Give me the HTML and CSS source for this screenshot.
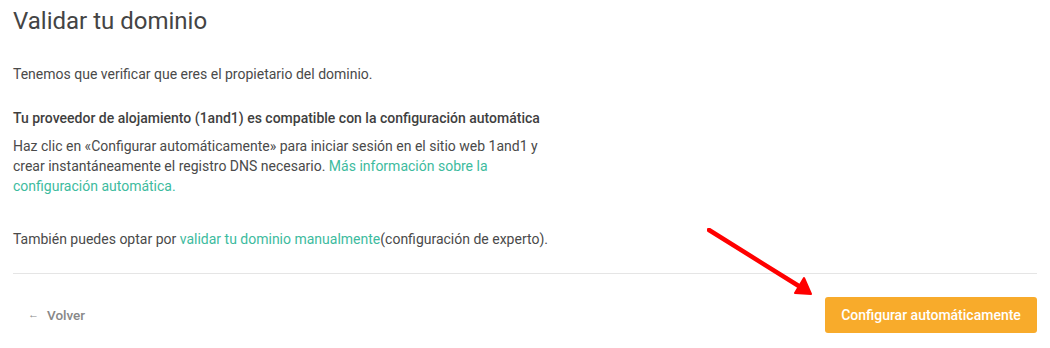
FILE: index.html
```html
<!DOCTYPE html>
<html lang="es">
<head>
<meta charset="utf-8">
<title>Validar tu dominio</title>
<link rel="stylesheet" href="styles.css">
</head>
<body>
<div class="page">
  <h1 class="title">Validar tu dominio</h1>
  <p class="intro">Tenemos que verificar que eres el propietario del dominio.</p>
  <div class="auto">
    <h2 class="auto-title">Tu proveedor de alojamiento (1and1) es compatible con la configuración automática</h2>
    <p class="auto-text">Haz clic en «Configurar automáticamente» para iniciar sesión en el sitio web 1and1 y crear instantáneamente el registro DNS necesario. <a class="link" href="#">Más información sobre la configuración automática.</a></p>
  </div>
  <p class="manual">También puedes optar por <a class="link" href="#">validar tu dominio manualmente</a>(configuración de experto).</p>
  <div class="footer">
    <a class="back" href="#"><span class="back-arrow">←</span>Volver</a>
    <button class="primary">Configurar automáticamente</button>
  </div>
</div>
<svg class="annotation" width="120" height="80" viewBox="0 0 120 80">
  <line x1="2" y1="2" x2="95" y2="60" stroke="#f00" stroke-width="4.5" stroke-linecap="round"/>
  <polygon points="104,66 88,65 97,50" fill="#f00" stroke="#f00" stroke-width="2" stroke-linejoin="round"/>
</svg>
</body>
</html>
```
FILE: styles.css
```css
html, body {
  margin: 0;
  padding: 0;
  background: #fff;
}
body {
  font-family: Roboto, "Liberation Sans", sans-serif;
  color: #4a4a4a;
  font-size: 14px;
  line-height: 20px;
  position: relative;
  width: 1050px;
  height: 348px;
  overflow: hidden;
}
.page {
  padding: 0 13px;
}
.title {
  margin: 7px 0 0;
  font-size: 24px;
  line-height: 28px;
  font-weight: 400;
  color: #444;
}
.intro {
  margin: 29px 0 0;
}
.auto {
  margin-top: 24px;
  max-width: 532px;
}
.auto-title {
  margin: 0;
  font-size: 14px;
  line-height: 20px;
  font-weight: 500;
  color: #3f3f3f;
}
.auto-text {
  margin: 8px 0 0;
}
.link {
  color: #3dbb9e;
  text-decoration: none;
}
.manual {
  margin: 33px 0 0;
}
.footer {
  margin-top: 24px;
  border-top: 1px solid #e5e5e5;
  padding-top: 23px;
  display: flex;
  align-items: center;
  justify-content: space-between;
}
.back {
  display: flex;
  align-items: center;
  margin-left: 15px;
  color: #888;
  text-decoration: none;
  font-weight: 500;
  font-size: 13.5px;
}
.back-arrow {
  font-size: 11px;
  margin-right: 8px;
}
.primary {
  width: 212px;
  height: 36px;
  border: 0;
  border-radius: 3px;
  background: #f8ab2b;
  color: #fff;
  font-family: Roboto, "Liberation Sans", sans-serif;
  font-size: 14px;
  font-weight: 500;
  padding: 0;
}
.annotation {
  position: absolute;
  left: 707px;
  top: 228px;
}
```
